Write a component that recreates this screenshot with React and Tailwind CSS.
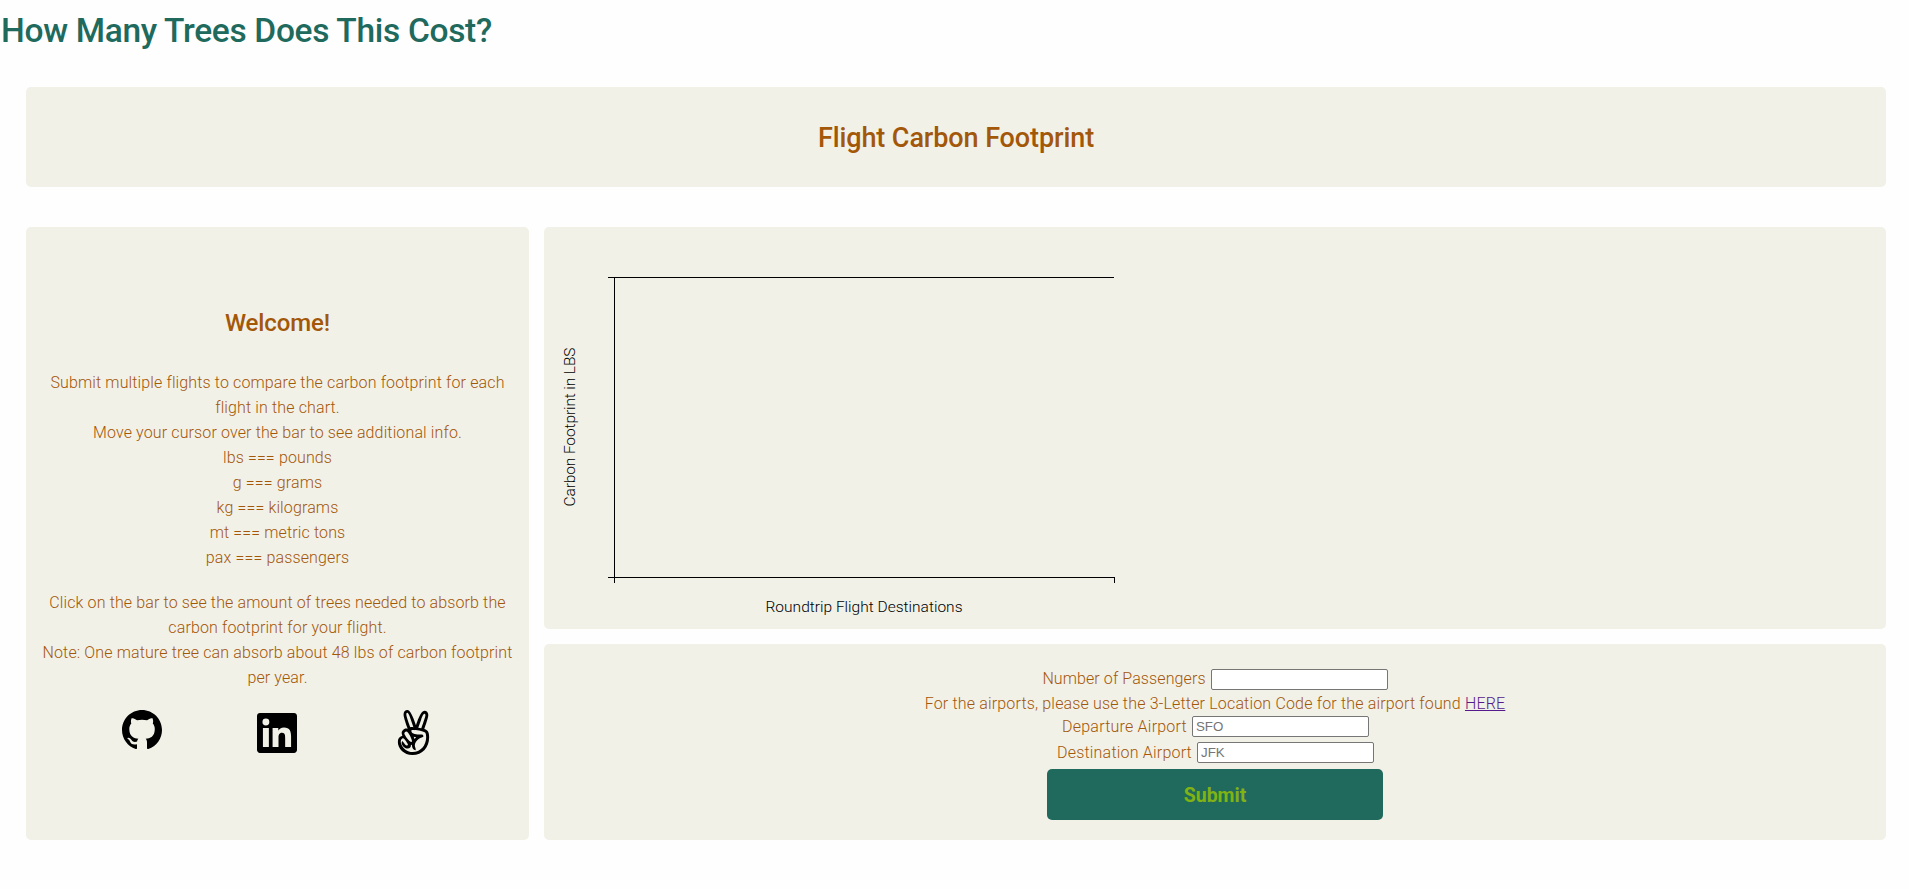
import React from 'react';
import { FaAngellist } from 'react-icons/fa';

function GithubIcon() {
  return (
    <svg viewBox="0 0 16 16" className="h-10 w-10" fill="currentColor" aria-hidden="true">
      <path d="M8 0C3.58 0 0 3.58 0 8c0 3.54 2.29 6.53 5.47 7.59.4.07.55-.17.55-.38 0-.19-.01-.82-.01-1.49-2.01.37-2.53-.49-2.69-.94-.09-.23-.48-.94-.82-1.13-.28-.15-.68-.52-.01-.53.63-.01 1.08.58 1.23.82.72 1.21 1.87.87 2.33.66.07-.52.28-.87.51-1.07-1.78-.2-3.64-.89-3.64-3.95 0-.87.31-1.59.82-2.15-.08-.2-.36-1.02.08-2.12 0 0 .67-.21 2.2.82.64-.18 1.32-.27 2-.27.68 0 1.36.09 2 .27 1.53-1.04 2.2-.82 2.2-.82.44 1.1.16 1.92.08 2.12.51.56.82 1.27.82 2.15 0 3.07-1.87 3.75-3.65 3.95.29.25.54.73.54 1.48 0 1.07-.01 1.93-.01 2.2 0 .21.15.46.55.38A8.013 8.013 0 0016 8c0-4.42-3.58-8-8-8z" />
    </svg>
  );
}

function LinkedinIcon() {
  return (
    <svg viewBox="0 0 24 24" className="h-10 w-10" fill="currentColor" aria-hidden="true">
      <path d="M20.447 20.452h-3.554v-5.569c0-1.328-.027-3.037-1.852-3.037-1.853 0-2.136 1.445-2.136 2.939v5.667H9.351V9h3.414v1.561h.046c.477-.9 1.637-1.85 3.37-1.85 3.601 0 4.267 2.37 4.267 5.455v6.286zM5.337 7.433a2.062 2.062 0 0 1-2.063-2.065 2.064 2.064 0 1 1 2.063 2.065zm1.782 13.019H3.555V9h3.564v11.452zM22.225 0H1.771C.792 0 0 .774 0 1.729v20.542C0 23.227.792 24 1.771 24h20.451C23.2 24 24 23.227 24 22.271V1.729C24 .774 23.2 0 22.222 0h.003z" />
    </svg>
  );
}

function Chart() {
  return (
    <svg
      width="620"
      height="402"
      viewBox="0 0 620 402"
      className="block font-['Roboto',sans-serif]"
      fontSize="15.5"
      fontWeight="350"
    >
      <g fill="none" stroke="#000" shapeRendering="crispEdges">
        <path d="M64 50.5H570" />
        <path d="M70.5 50V356" />
        <path d="M64 350.5H570.5V356" />
      </g>
      <text transform="translate(30.5 279.5) rotate(-90)" textLength="159" lengthAdjust="spacing">
        Carbon Footprint in LBS
      </text>
      <text x="221.5" y="385" textLength="197" lengthAdjust="spacing">
        Roundtrip Flight Destinations
      </text>
    </svg>
  );
}

const inputClass =
  "h-[21px] w-[177px] rounded-[2px] border border-[#767676] bg-white px-[3px] font-['Liberation_Sans',sans-serif] text-[13.333px] font-normal tracking-normal text-black placeholder:text-[#757575] outline-none";

export default function App() {
  return (
    <div className="min-h-[889px] bg-[#fefefe] font-['Roboto',sans-serif] text-base font-[350] whitespace-nowrap text-[#a35709]">
      <h1 className="h-[87px] pt-[10px] pl-[1px] text-[33.5px] leading-[42px] font-medium tracking-[-0.32px] text-[#206a5d]">
        How Many Trees Does This Cost?
      </h1>

      <main className="mr-[23px] ml-[26px]">
        <header className="flex h-[100px] items-center justify-center rounded-[5px] bg-[#f1f1e8] pt-0.5">
          <h2 className="text-[27px] leading-10 font-medium tracking-[-0.1px]">Flight Carbon Footprint</h2>
        </header>

        <div className="mt-10 flex h-[613px] gap-[15px]">
          <aside className="w-[503px] shrink-0 rounded-[5px] bg-[#f1f1e8] pt-[76px] text-center leading-[25px] tracking-[0.13px]">
            <h3 className="mb-[27px] text-2xl leading-10 font-medium tracking-[-0.1px]">Welcome!</h3>
            <p>
              Submit multiple flights to compare the carbon footprint for each
              <br />
              flight in the chart.
            </p>
            <p>Move your cursor over the bar to see additional info.</p>
            <p>lbs === pounds</p>
            <p>g === grams</p>
            <p>kg === kilograms</p>
            <p>mt === metric tons</p>
            <p>pax === passengers</p>
            <p className="mt-5">
              Click on the bar to see the amount of trees needed to absorb the
              <br />
              carbon footprint for your flight.
            </p>
            <p>
              Note: One mature tree can absorb about 48 lbs of carbon footprint
              <br />
              per year.
            </p>
            <div className="mt-5 flex items-start pl-24 text-black">
              <a className="w-[135px]"><GithubIcon /></a>
              <a className="w-[134px] pt-[3px]"><LinkedinIcon /></a>
              <a><FaAngellist className="h-[45px] w-[45px]" /></a>
            </div>
          </aside>

          <div className="flex min-w-0 flex-1 flex-col gap-[15px]">
            <section className="h-[402px] rounded-[5px] bg-[#f1f1e8]">
              <Chart />
            </section>

            <form className="flex h-[196px] flex-col items-center rounded-[5px] bg-[#f1f1e8] pt-[22px] leading-[25px]">
              <div className="flex h-[25px] items-center gap-[5px]">
                <label className="tracking-[0.1px]">Number of Passengers</label>
                <input className={`${inputClass} mt-[2px]`} />
              </div>
              <p className="tracking-[0.17px]">
                For the airports, please use the 3-Letter Location Code for the airport found{' '}
                <a className="text-[#551a8b] underline">HERE</a>
              </p>
              <div className="-mt-0.5 flex h-6 items-center gap-[5px]">
                <label className="pl-px tracking-[0.22px]">Departure Airport</label>
                <input className={`${inputClass} mt-px`} placeholder="SFO" />
              </div>
              <div className="mt-0.5 flex h-6 items-center gap-[5px]">
                <label className="pl-px tracking-[0.2px]">Destination Airport</label>
                <input className={`${inputClass} mt-px`} placeholder="JFK" />
              </div>
              <button
                type="button"
                className="mt-[5px] h-[51px] w-[336px] rounded-[5px] bg-[#206a5d] pt-0.5 text-[19.5px] font-bold text-[#81b214]"
              >
                Submit
              </button>
            </form>
          </div>
        </div>
      </main>
    </div>
  );
}
